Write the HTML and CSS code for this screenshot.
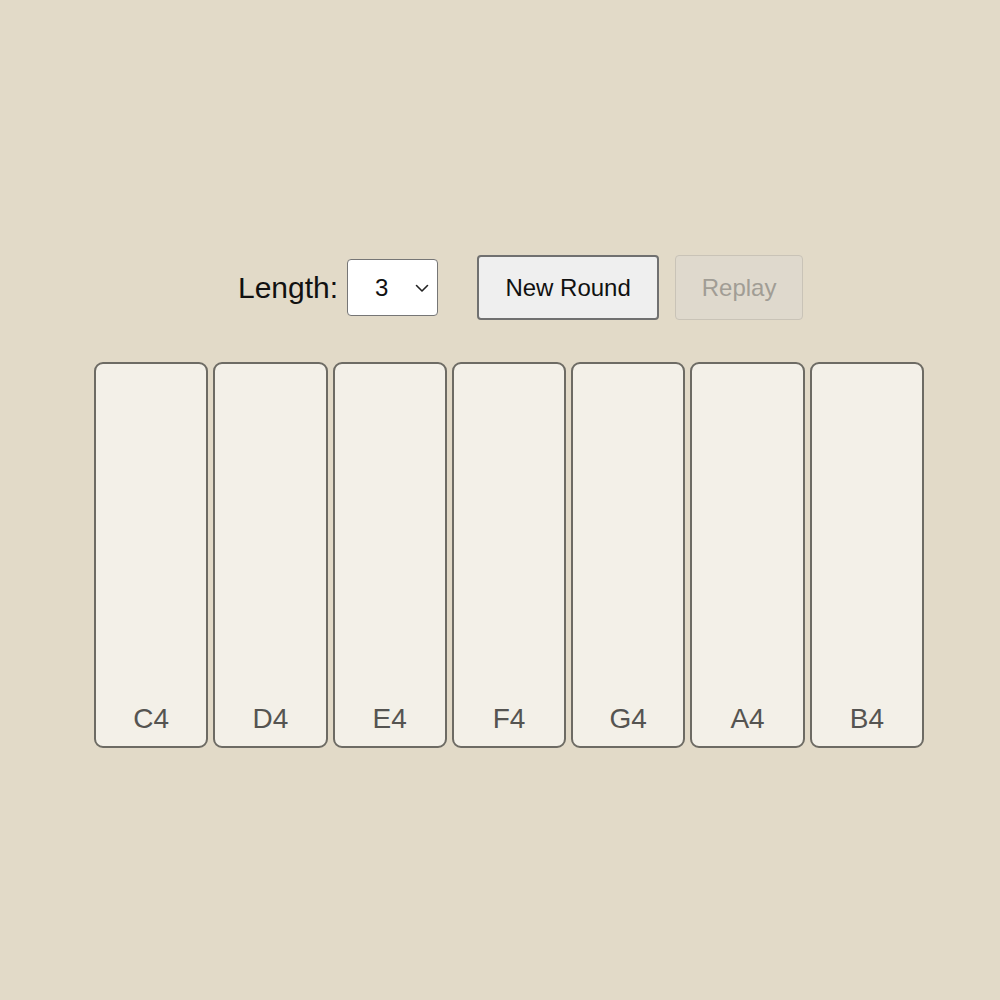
FILE: index.html
```html
<!DOCTYPE html>
<html lang="en">
<head>
<meta charset="utf-8">
<title>Ear Trainer</title>
<link rel="stylesheet" href="styles.css">
</head>
<body>
<main class="app">
  <div class="controls">
    <label class="length-label" for="len">Length:</label>
    <div class="select-wrap">
      <select id="len" class="length-select">
        <option>2</option>
        <option selected>3</option>
        <option>4</option>
        <option>5</option>
      </select>
      <svg class="chevron" width="14" height="9" viewBox="0 0 14 9"><path d="M1.5 1.5 L7 7 L12.5 1.5" fill="none" stroke="#222" stroke-width="1.6" stroke-linecap="round" stroke-linejoin="round"/></svg>
    </div>
    <button class="btn btn-primary">New Round</button>
    <button class="btn btn-disabled" disabled>Replay</button>
  </div>
  <div class="keys">
    <button class="key"><span>C4</span></button>
    <button class="key"><span>D4</span></button>
    <button class="key"><span>E4</span></button>
    <button class="key"><span>F4</span></button>
    <button class="key"><span>G4</span></button>
    <button class="key"><span>A4</span></button>
    <button class="key"><span>B4</span></button>
  </div>
</main>
</body>
</html>
```
FILE: styles.css
```css
html, body {
  margin: 0;
  padding: 0;
}
body {
  background: #e2dac8;
  font-family: "Liberation Sans", Arial, sans-serif;
  width: 1000px;
  height: 1000px;
}
.app {
  padding-top: 255px;
  padding-left: 94px;
}
.controls {
  display: flex;
  align-items: center;
  height: 65px;
  margin-left: 144px;
}
.length-label {
  font-size: 30px;
  color: #111;
  margin-right: 9px;
}
.select-wrap {
  position: relative;
  width: 91px;
  height: 57px;
  margin-right: 39px;
}
.length-select {
  appearance: none;
  -webkit-appearance: none;
  width: 91px;
  height: 57px;
  box-sizing: border-box;
  background: #fff;
  border: 1.5px solid #767676;
  border-radius: 4px;
  font-family: "Liberation Sans", Arial, sans-serif;
  font-size: 24px;
  color: #111;
  padding-left: 27px;
}
.chevron {
  position: absolute;
  right: 9px;
  top: 25px;
}
.btn {
  height: 65px;
  box-sizing: border-box;
  border-radius: 4px;
  font-family: "Liberation Sans", Arial, sans-serif;
  font-size: 24px;
  padding: 0;
}
.btn-primary {
  width: 182px;
  background: #efefef;
  border: 2px solid #707070;
  color: #111;
  margin-right: 16px;
}
.btn-disabled {
  width: 128px;
  background: #dfd9cd;
  border: 1.5px solid #c9c3b7;
  color: #a19d95;
}
.keys {
  display: grid;
  grid-template-columns: repeat(7, 1fr);
  column-gap: 5px;
  width: 830px;
  margin-top: 42px;
}
.key {
  height: 386px;
  min-width: 0;
  box-sizing: border-box;
  background: #f3f0e8;
  border: 2px solid #6d6b64;
  border-radius: 9px;
  display: flex;
  align-items: flex-end;
  justify-content: center;
  padding: 0 0 11px;
  font-family: "Liberation Sans", Arial, sans-serif;
  font-size: 28px;
  color: #555451;
}
```
